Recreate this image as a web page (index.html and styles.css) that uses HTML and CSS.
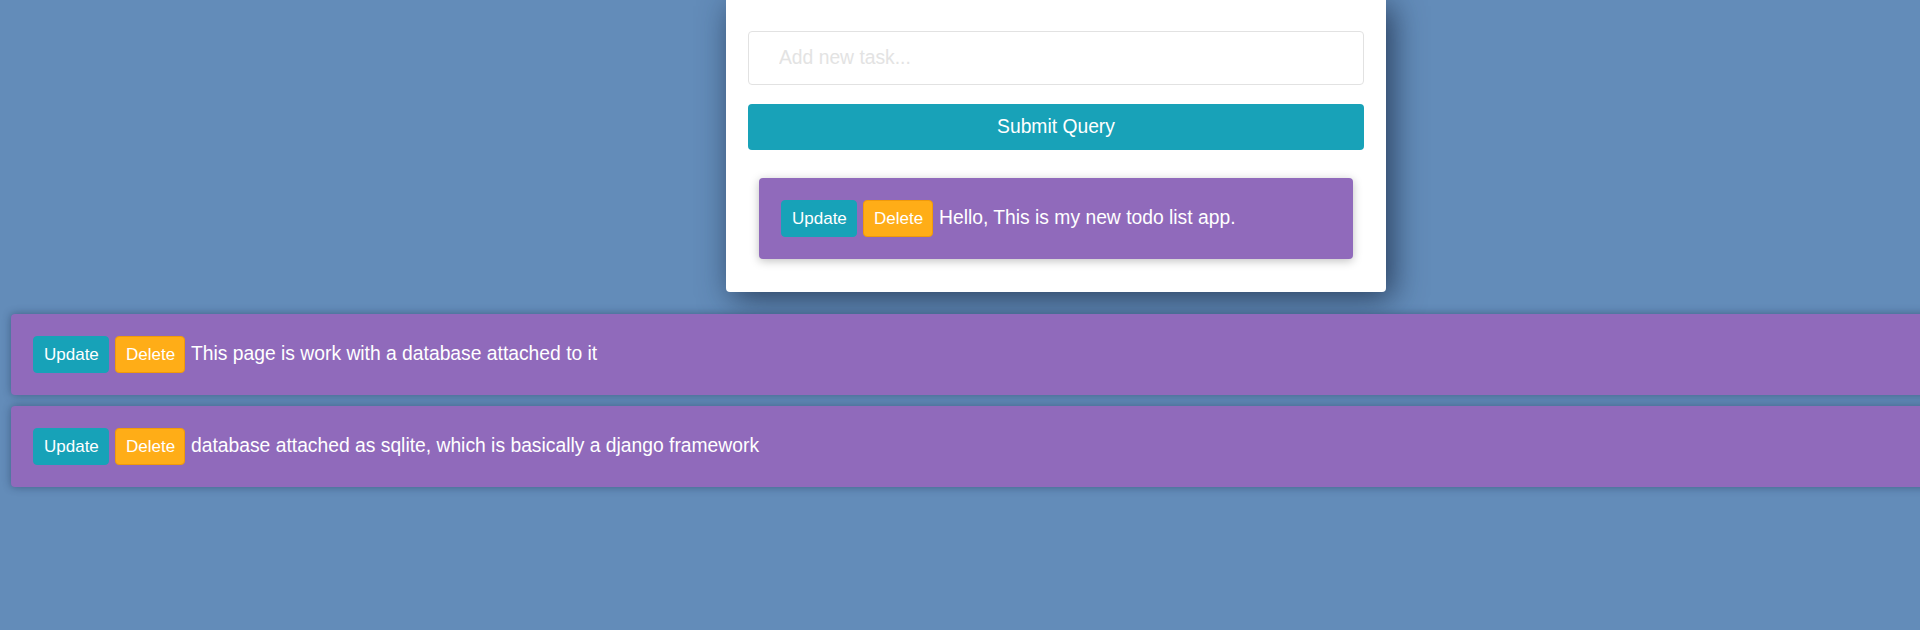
FILE: index.html
```html
<!DOCTYPE html>
<html>
<head>
<meta charset="utf-8">
<link rel="stylesheet" href="styles.css">
</head>
<body>
<div class="page">
  <div class="card">
    <form class="form">
      <input class="task-input" type="text" placeholder="Add new task...">
      <button class="submit" type="button">Submit Query</button>
    </form>
    <div class="task task-inner">
      <button class="btn btn-update">Update</button>
      <button class="btn btn-delete">Delete</button>
      <span class="task-text">Hello, This is my new todo list app.</span>
    </div>
  </div>
  <div class="list">
    <div class="task task-wide">
      <button class="btn btn-update">Update</button>
      <button class="btn btn-delete">Delete</button>
      <span class="task-text">This page is work with a database attached to it</span>
    </div>
    <div class="task task-wide">
      <button class="btn btn-update">Update</button>
      <button class="btn btn-delete">Delete</button>
      <span class="task-text">database attached as sqlite, which is basically a django framework</span>
    </div>
  </div>
</div>
</body>
</html>
```

FILE: styles.css
```css
html, body {
  margin: 0;
  padding: 0;
  overflow: hidden;
  background: #638cb9;
  font-family: "Liberation Sans", Arial, sans-serif;
}

.page {
  display: flex;
  flex-direction: column;
  width: 1920px;
  height: 630px;
}

.card {
  align-self: flex-start;
  margin-left: 726px;
  width: 660px;
  box-sizing: border-box;
  background: #ffffff;
  padding: 31px 22px 33px;
  border-radius: 0 0 4px 4px;
  box-shadow: 6px 6px 32px rgba(20, 35, 60, 0.75);
}

.form {
  display: flex;
  flex-direction: column;
  gap: 19px;
  margin: 0;
}

.task-input {
  height: 54px;
  box-sizing: border-box;
  border: 1px solid #e2e2e2;
  border-radius: 4px;
  padding: 0 30px;
  font-family: "Liberation Sans", Arial, sans-serif;
  font-size: 19.3px;
  color: #333;
  outline: none;
}

.task-input::placeholder {
  color: #e3e3e3;
}

.submit {
  height: 46px;
  border: none;
  border-radius: 4px;
  background: #18a2b8;
  color: #ffffff;
  font-family: "Liberation Sans", Arial, sans-serif;
  font-size: 19.3px;
  padding: 0;
}

.task {
  display: flex;
  align-items: baseline;
  gap: 6px;
  box-sizing: border-box;
  height: 81px;
  padding: 22px;
  background: #906abb;
  border-radius: 4px;
  color: #ffffff;
}

.task-inner {
  margin: 28px 11px 0;
  box-shadow: 0 2px 10px rgba(0, 0, 0, 0.25);
}

.list {
  display: flex;
  flex-direction: column;
  gap: 11px;
  margin-top: 22px;
  padding-left: 11px;
}

.task-wide {
  width: 1940px;
  box-shadow: 0 0 8px rgba(20, 40, 70, 0.45);
}

.btn {
  height: 37px;
  box-sizing: border-box;
  border-radius: 4px;
  font-family: "Liberation Sans", Arial, sans-serif;
  font-size: 17px;
  color: #ffffff;
  padding: 0 10px;
  flex: none;
}

.btn-update {
  width: 76px;
  background: #17a2b8;
  border: 1px solid #17a2b8;
}

.btn-delete {
  width: 70px;
  background: #ffad17;
  border: 1px solid #f09a0a;
}

.task-text {
  font-size: 19.3px;
  white-space: nowrap;
}
```
